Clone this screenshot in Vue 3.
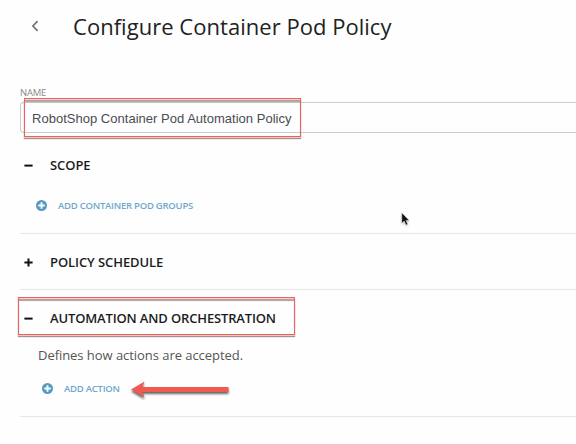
<script setup>
const icons = {
  minus: 'M0.4 3.6h8.2v2H0.4z',
  plus: 'M3.5 0.4h2v3.1h3.1v2H5.5v3.1h-2V5.5H0.4v-2h3.1z',
}
</script>

<template>
  <main class="page">
    <header class="head">
      <svg class="back" viewBox="0 0 8 12"><path d="M6.6 1.2 1.9 6l4.7 4.8" /></svg>
      <h1>Configure Container Pod Policy</h1>
    </header>

    <label class="label">NAME</label>
    <div class="field">
      <span class="value">RobotShop Container Pod Automation Policy</span>
      <i class="mark mark-name"></i>
    </div>

    <section class="scope">
      <h2><svg viewBox="0 0 9 9"><path :d="icons.minus" /></svg><span>SCOPE</span></h2>
      <a class="add">
        <svg viewBox="0 0 11 11"><circle cx="5.5" cy="5.5" r="5.5" /><path d="M5.5 2.3v6.4M2.3 5.5h6.4" /></svg>
        <span>ADD CONTAINER POD GROUPS</span>
      </a>
    </section>

    <section class="schedule">
      <h2><svg viewBox="0 0 9 9"><path :d="icons.plus" /></svg><span>POLICY SCHEDULE</span></h2>
    </section>

    <section class="automation">
      <h2>
        <svg viewBox="0 0 9 9"><path :d="icons.minus" /></svg><span class="wide">AUTOMATION AND ORCHESTRATION</span>
        <i class="mark mark-auto"></i>
      </h2>
      <p>Defines how actions are accepted.</p>
      <a class="add action">
        <svg viewBox="0 0 11 11"><circle cx="5.5" cy="5.5" r="5.5" /><path d="M5.5 2.3v6.4M2.3 5.5h6.4" /></svg>
        <span>ADD ACTION</span>
        <svg class="arrow" viewBox="0 0 100 18"><path d="M1 8.5 14.5 0.5 12.5 6H98.5V11H12.5L14.5 16.5z" /></svg>
      </a>
    </section>

    <svg class="cursor" viewBox="0 0 9 14"><path d="M0.8 0.8v10.4l2.4-2.2 1.8 4.1 1.8-.8-1.8-3.9h3.2z" /></svg>
  </main>
</template>

<style>
body { margin: 0; background: #fff; }
</style>

<style scoped>
.page {
  position: relative;
  box-sizing: border-box;
  height: 444px;
  padding-left: 20px;
  overflow: hidden;
  background: #fefefe;
  font-family: "Open Sans", "Noto Sans", sans-serif;
  white-space: nowrap;
}
svg { display: block; flex: none; }
.head { display: flex; align-items: center; height: 52px; padding-left: 11px; }
.back { width: 8px; height: 12px; fill: none; stroke: #737373; stroke-width: 1.7; }
h1 { margin: 0 0 0 34px; font-size: 22px; line-height: 30px; font-weight: 400; letter-spacing: .03px; color: #222; }
.label { display: block; margin-top: 33px; height: 17px; font-size: 9.5px; letter-spacing: -.2px; line-height: 15px; color: #888; }
.field {
  position: relative;
  box-sizing: border-box;
  display: flex;
  align-items: center;
  height: 31px;
  padding-left: 11px;
  border: 1px solid #ccc;
  border-right: 0;
  border-radius: 4px 0 0 4px;
}
.value { padding-top: 1px; font-family: "Liberation Sans", Arial, sans-serif; font-size: 13px; letter-spacing: .02px; color: #4b4b54; }
.mark {
  position: absolute;
  box-sizing: border-box;
  border: 1px solid #ed625d;
  box-shadow: 0 1px 0 #edc9c4, 0 2px 1px #6d504aa0, inset 0 1px 0 #f7d0cb, inset 0 3px 1px #6d504a88;
}
.mark-name { left: 3px; top: -5px; width: 277px; height: 39px; }
section { border-bottom: 1px solid #e7e7e7; box-sizing: border-box; }
h2 {
  position: relative;
  display: flex;
  align-items: center;
  height: 32px;
  margin: 0;
  padding-left: 4px;
  font-size: 13px;
  font-weight: 600;
  letter-spacing: -.08px;
  color: #1c1c1c;
}
h2 .wide { letter-spacing: -.15px; }
h2 svg { width: 9px; height: 9px; margin-right: 17px; fill: #111; }
.scope { height: 101px; padding-top: 16px; }
.schedule { height: 56px; padding-top: 12px; }
.automation { height: 127px; padding-top: 12px; }
.add { display: flex; align-items: center; height: 16px; margin-top: 16px; padding-left: 16px; color: #6fa8cb; font-size: 9.5px; font-weight: 600; letter-spacing: -.24px; }
.add > svg:first-child { width: 11px; height: 11px; margin-right: 11px; fill: #5799c2; stroke: #fff; stroke-width: 1.8; }
.add circle { stroke: none; }
.mark-auto { left: -2px; top: -5px; width: 277px; height: 38px; }
p { margin: 10px 0 0 18px; height: 22px; font-size: 13px; line-height: 22px; letter-spacing: -.05px; color: #555; }
.action { margin-top: 14px; padding-left: 22px; }
.arrow { width: 100px; height: 18px; margin-left: 10px; margin-top: 3px; fill: #ef5b50; filter: drop-shadow(0 2px 1px #0009); }
.cursor { position: absolute; left: 401px; top: 212px; width: 9px; height: 14px; fill: #111; stroke: #fff; stroke-width: .4; filter: drop-shadow(0 1px 1px #0004); }
</style>
